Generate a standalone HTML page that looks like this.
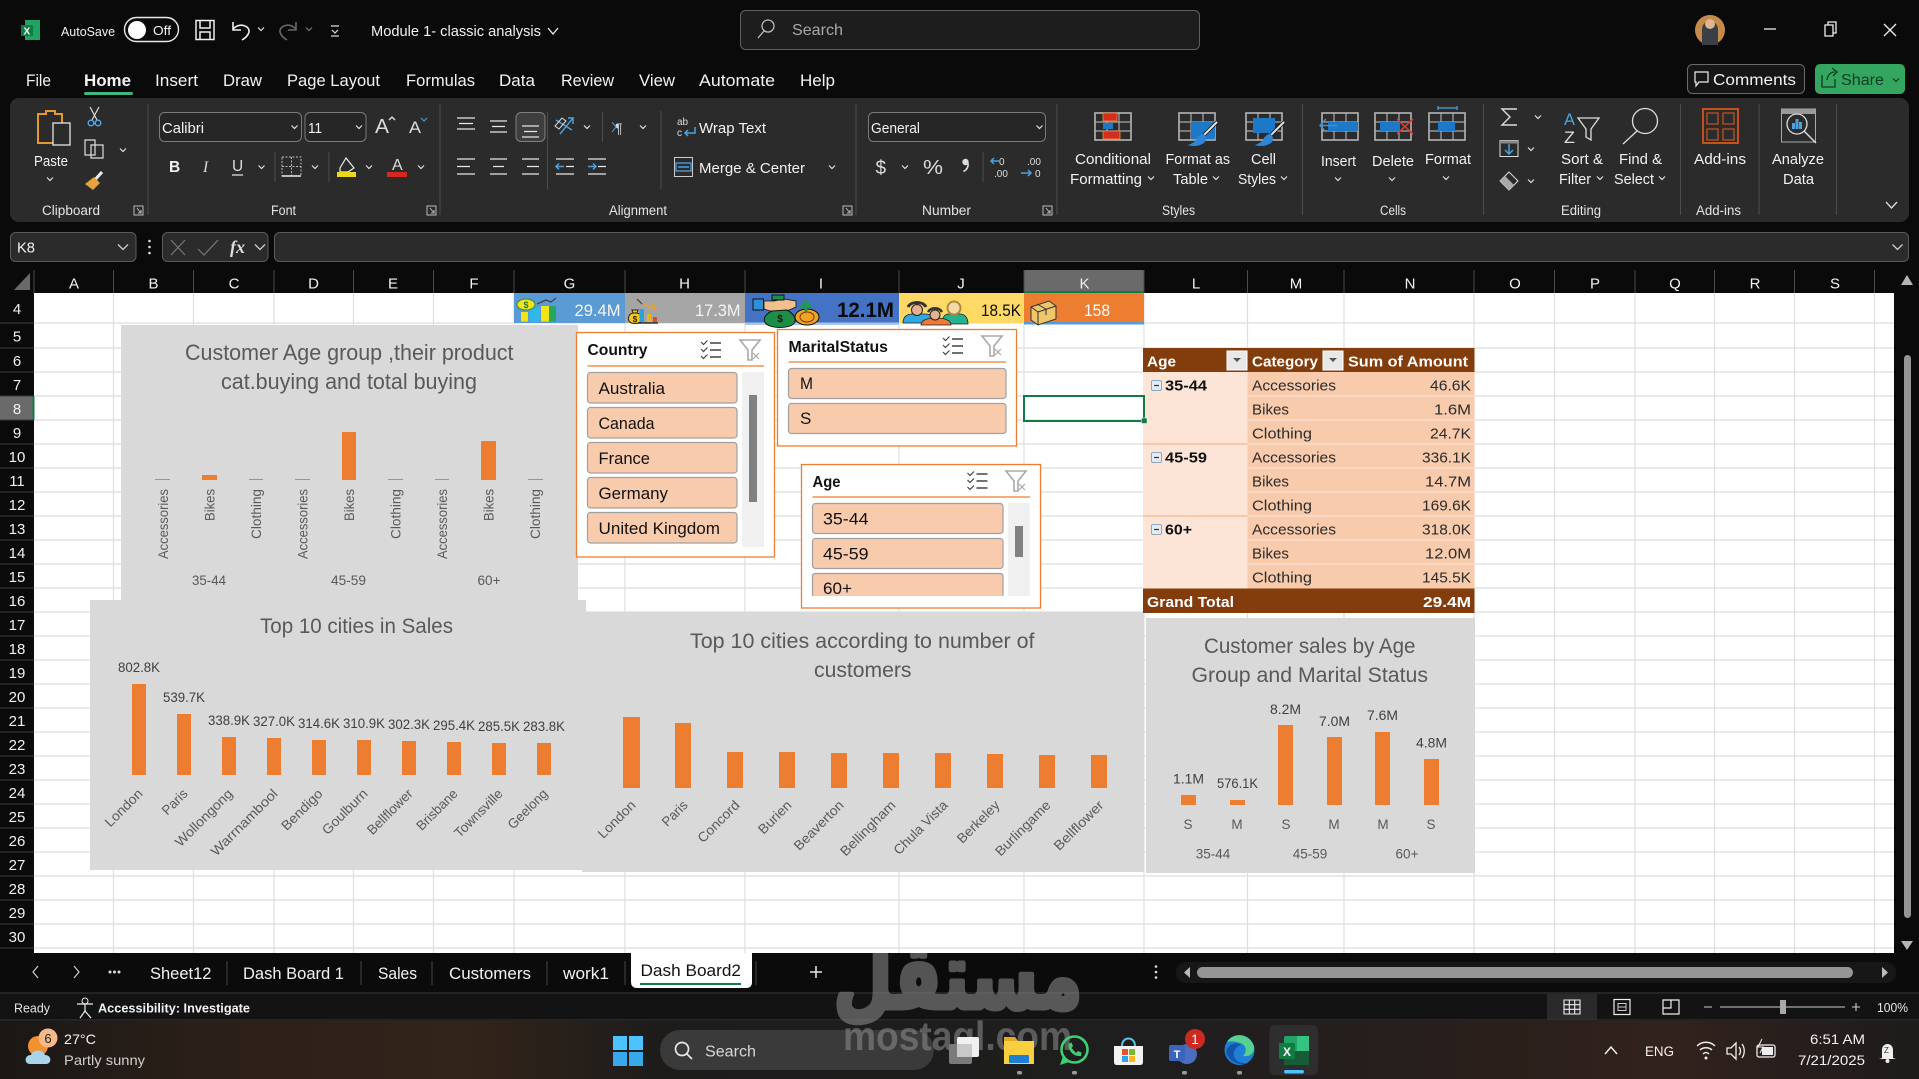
<!DOCTYPE html>
<html lang="en"><head><meta charset="utf-8"><title>Module 1- classic analysis - Excel</title>
<style>
html,body{margin:0;padding:0;background:#0a0a0a;width:1919px;height:1079px;overflow:hidden}
svg{display:block;font-family:"Liberation Sans",sans-serif}
.w{fill:#f2f2f2}.g{fill:#595959}.d{fill:#404040}.k{fill:#111}
.ln{fill:none;stroke:#e6e6e6;stroke-width:1.3}
.lb{fill:none;stroke:#4aa3e0;stroke-width:1.5}
.sep{stroke:#4d4d4d;stroke-width:1}
</style></head><body>
<svg xmlns="http://www.w3.org/2000/svg" width="1919" height="1079" viewBox="0 0 1919 1079">
<defs>
<path id="c" d="M-3-1.5 0 1.5 3-1.5" fill="none" stroke="#e0e0e0" stroke-width="1.2"/>
<path id="cb" d="M-5-2.5 0 2.5 5-2.5" fill="none" stroke="#d0d0d0" stroke-width="1.3"/>
<g id="gr"><path d="M12 0V27M24 0V27M0 9H36M0 18H36" stroke="#a8a8a8" stroke-width="1.2"/><rect x="0" y="0" width="36" height="27" fill="none" stroke="#b5b5b5" stroke-width="1.6"/></g>
<g id="br"><path d="M0 0 -15 15" stroke="#111" stroke-width="3.6"/><path d="M0 0 -15 15" stroke="#e8e8e8" stroke-width="2"/><path d="M-13 12C-18 12-20 16-21 18-23 21-27 22-29 23-24 25-17 24-13 21-10 18-11 14-13 12Z" fill="#2f86d6"/></g>
<g id="ms"><path d="M0 2l2.500 2.500 4-4M0 9l2.500 2.500 4-4M0 16l2.500 2.500 4-4" fill="none" stroke="#444" stroke-width="1.2"/><path d="M9 3H20M9 10H20M9 17H20" stroke="#444" stroke-width="1.4"/></g>
<g id="cf"><path d="M0 0H20L12 10V20H8V10Z" fill="none" stroke="#a8a8a8" stroke-width="1.6"/><path d="M13 13l6 6M19 13l-6 6" stroke="#a8a8a8" stroke-width="1.2"/></g>
<g id="mb"><rect width="10" height="10" rx="1.500" fill="#e3ebf3" stroke="#8fa6bd"/><path d="M2.500 5H7.500" stroke="#333" stroke-width="1.2"/></g>
<g id="db"><rect width="20" height="19" fill="#e8e8e8" stroke="#fff"/><path d="M6 7H14L10 11Z" fill="#555"/></g>
</defs>

<!-- window background -->
<rect width="1919" height="1079" fill="#0a0a0a"/>

<!-- title bar -->
<rect x="25" y="20" width="15" height="20" fill="#21a366"/><rect x="21" y="25" width="12" height="11" fill="#107c41"/>
<text x="23.500" y="34.500" font-size="10" font-weight="bold" fill="#fff">X</text>
<text x="61" y="36" font-size="13" class="w" textLength="54" lengthAdjust="spacingAndGlyphs">AutoSave</text>
<rect x="124.500" y="17.500" width="54" height="24" rx="12" fill="#0a0a0a" stroke="#e8e8e8" stroke-width="1.4"/>
<circle cx="137" cy="30" r="9" fill="#fff"/>
<text x="153" y="35" font-size="13" class="w" textLength="18" lengthAdjust="spacingAndGlyphs">Off</text>
<path d="M196 20.500H214V39.500H196ZM200 21V28H210V21M200 39V32H210V39" fill="none" stroke="#eee" stroke-width="1.500"/>
<path d="M233 22V30H241M233 29C240 22 250 26 249 32 248 36 245 38 242 40" fill="none" stroke="#eee" stroke-width="1.600"/>
<use href="#c" x="261" y="29"/>
<path d="M296 22V30H288M296 29C289 22 279 26 280 32 281 36 284 38 287 40" fill="none" stroke="#666" stroke-width="1.600"/>
<use href="#c" x="309" y="29" opacity=".5"/>
<path d="M331 26H339M332 30 335 33 338 30" fill="none" stroke="#ddd" stroke-width="1.200"/><path d="M331 36H339" stroke="#ddd" stroke-width="1.200"/>
<text x="371" y="36" font-size="14.500" class="w" textLength="170" lengthAdjust="spacingAndGlyphs">Module 1- classic analysis</text>
<path d="M548 28 553 34 558 28" fill="none" stroke="#eee" stroke-width="1.300"/>
<rect x="740.500" y="10.500" width="459" height="39" rx="5" fill="#1d1d1d" stroke="#5f5f5f"/>
<circle cx="768" cy="26" r="6" fill="none" stroke="#bbb" stroke-width="1.300"/><path d="M764 31 758 38" stroke="#bbb" stroke-width="1.300"/>
<text x="792" y="35" font-size="16" fill="#a8a8a8" textLength="51" lengthAdjust="spacingAndGlyphs">Search</text>
<circle cx="1710" cy="30" r="15" fill="#c58a4a"/><path d="M1702 45V30C1702 18 1718 18 1718 30V45Z" fill="#3a3f45"/><circle cx="1710" cy="24" r="5" fill="#e0b48c"/>
<path d="M1764 29H1776" stroke="#eee" stroke-width="1.300"/>
<path d="M1825 25H1833V36H1825ZM1828 25V22H1836V33H1833" fill="none" stroke="#eee" stroke-width="1.300"/>
<path d="M1884 24 1896 36M1896 24 1884 36" stroke="#eee" stroke-width="1.300"/>

<!-- comments/share -->
<rect x="1687.500" y="64.500" width="117" height="29" rx="5" fill="#161616" stroke="#6a6a6a"/>
<path d="M1695 72H1708V82H1699L1696 86V82H1695Z" fill="none" stroke="#eee" stroke-width="1.200"/>
<text x="1713" y="85" font-size="15.500" class="w" textLength="83" lengthAdjust="spacingAndGlyphs">Comments</text>
<rect x="1815" y="64" width="90" height="30" rx="5" fill="#34a660"/>
<path d="M1822 75V87H1835V79M1827 80C1828 74 1831 72 1835 72M1832 68 1837 72 1833 76" fill="none" stroke="#0f3d22" stroke-width="1.300"/>
<text x="1841" y="85" font-size="15.500" fill="#0f3d22" textLength="43" lengthAdjust="spacingAndGlyphs">Share</text>
<path d="M1893 78.500 1896 81.500 1899 78.500" fill="none" stroke="#0f3d22" stroke-width="1.200"/>

<!-- tabs -->
<g font-size="16.500" class="w">
<text x="26" y="86" textLength="25" lengthAdjust="spacingAndGlyphs">File</text>
<text x="84" y="86" font-weight="bold" textLength="47" lengthAdjust="spacingAndGlyphs">Home</text>
<text x="155" y="86" textLength="43" lengthAdjust="spacingAndGlyphs">Insert</text>
<text x="223" y="86" textLength="39" lengthAdjust="spacingAndGlyphs">Draw</text>
<text x="287" y="86" textLength="93" lengthAdjust="spacingAndGlyphs">Page Layout</text>
<text x="406" y="86" textLength="69" lengthAdjust="spacingAndGlyphs">Formulas</text>
<text x="499" y="86" textLength="36" lengthAdjust="spacingAndGlyphs">Data</text>
<text x="561" y="86" textLength="53" lengthAdjust="spacingAndGlyphs">Review</text>
<text x="639" y="86" textLength="36" lengthAdjust="spacingAndGlyphs">View</text>
<text x="699" y="86" textLength="76" lengthAdjust="spacingAndGlyphs">Automate</text>
<text x="800" y="86" textLength="35" lengthAdjust="spacingAndGlyphs">Help</text>
</g>
<rect x="84" y="92" width="49" height="3" rx="1.500" fill="#3fb67f"/>

<!-- ribbon -->
<rect x="10" y="98" width="1899" height="124" rx="9" fill="#2b2b2b"/>
<path class="sep" d="M148 104V215M440 104V215M856 104V215M1057 104V215M1302.500 104V215M1483.500 104V215M1680.500 104V215M1759 104V215M1836.500 104V215M547.500 112V189M602.500 112V142M661 111V189M275 152V182M329 152V182M983 152V182"/>

<!-- clipboard -->
<path d="M38 114H46V111H55V114H62V143H38Z" fill="none" stroke="#e8962e" stroke-width="2"/>
<rect x="53" y="123" width="17" height="22" fill="#2b2b2b" stroke="#e6e6e6" stroke-width="1.300"/>
<text x="34" y="166" font-size="14.500" class="w" textLength="34" lengthAdjust="spacingAndGlyphs">Paste</text>
<use href="#c" x="50" y="179"/>
<path d="M90 107 97 120M99 107 92 120" stroke="#ddd" stroke-width="1.200"/><circle cx="91" cy="123" r="2.800" class="lb"/><circle cx="98" cy="123" r="2.800" class="lb"/>
<path d="M85 140H95V155H85ZM91 145H103V158H91Z" fill="#2b2b2b" stroke="#ddd" stroke-width="1.200"/>
<use href="#c" x="123" y="150"/>
<path d="M102 172 93 182" stroke="#eee" stroke-width="3"/><path d="M85 184 94 177 100 183 93 190Z" fill="#e8a33a"/>

<text x="42" y="215" font-size="13.500" fill="#e4e4e4" textLength="58" lengthAdjust="spacingAndGlyphs">Clipboard</text>
<text x="271" y="215" font-size="13.500" fill="#e4e4e4" textLength="25" lengthAdjust="spacingAndGlyphs">Font</text>
<text x="609" y="215" font-size="13.500" fill="#e4e4e4" textLength="58" lengthAdjust="spacingAndGlyphs">Alignment</text>
<text x="922" y="215" font-size="13.500" fill="#e4e4e4" textLength="49" lengthAdjust="spacingAndGlyphs">Number</text>
<text x="1162" y="215" font-size="13.500" fill="#e4e4e4" textLength="33" lengthAdjust="spacingAndGlyphs">Styles</text>
<text x="1380" y="215" font-size="13.500" fill="#e4e4e4" textLength="26" lengthAdjust="spacingAndGlyphs">Cells</text>
<text x="1561" y="215" font-size="13.500" fill="#e4e4e4" textLength="40" lengthAdjust="spacingAndGlyphs">Editing</text>
<text x="1696" y="215" font-size="13.500" fill="#e4e4e4" textLength="45" lengthAdjust="spacingAndGlyphs">Add-ins</text>
<g fill="none" stroke="#bbb" stroke-width="1"><path d="M134 206V215H143V206ZM137 208 141 213M141 210V213H138"/><path d="M427 206V215H436V206ZM430 208 434 213M434 210V213H431"/><path d="M843 206V215H852V206ZM846 208 850 213M850 210V213H847"/><path d="M1043 206V215H1052V206ZM1046 208 1050 213M1050 210V213H1047"/></g>

<!-- font -->
<rect x="159.500" y="112.500" width="142" height="29" rx="5" fill="#262626" stroke="#7a7a7a"/>
<text x="162" y="133" font-size="15" class="w" textLength="42" lengthAdjust="spacingAndGlyphs">Calibri</text><use href="#c" x="294.500" y="127"/>
<rect x="305" y="112.500" width="61" height="29" rx="5" fill="#262626" stroke="#7a7a7a"/>
<text x="308" y="133" font-size="15" class="w" textLength="14" lengthAdjust="spacingAndGlyphs">11</text><use href="#c" x="359" y="127"/>
<text x="375" y="133" font-size="20" fill="#ddd" textLength="14" lengthAdjust="spacingAndGlyphs">A</text><path d="M389 120 392 117 395 120" class="ln" stroke-width="1"/>
<text x="409" y="133" font-size="17" fill="#ddd" textLength="12" lengthAdjust="spacingAndGlyphs">A</text><path d="M421 118 424 121 427 118" fill="none" stroke="#4aa3e0"/>
<text x="169" y="172" font-size="15.500" font-weight="bold" class="w">B</text>
<text x="203" y="172" font-size="15.500" font-style="italic" fill="#ddd" font-family="Liberation Serif">I</text>
<text x="232" y="171" font-size="15.500" fill="#ddd">U</text><path d="M232 175H243" stroke="#ddd" stroke-width="1.300"/>
<use href="#c" x="261.500" y="167"/>
<path d="M282 157H301V176H282ZM291.500 157V176M282 166.500H301" fill="none" stroke="#bbb" stroke-dasharray="2 1.500"/><path d="M282 176H301" stroke="#eee" stroke-width="1.500"/>
<use href="#c" x="315" y="167"/>
<path d="M346 158 354 168 348 172H340L340 168Z" fill="none" stroke="#eee" stroke-width="1.200"/>
<rect x="337" y="172" width="19" height="5" fill="#ebd81a"/><use href="#c" x="369" y="167"/>
<text x="392" y="170" font-size="16" fill="#ddd">A</text><rect x="387" y="172" width="20" height="5" fill="#d7281e"/><use href="#c" x="421" y="167"/>

<!-- alignment -->
<path class="ln" d="M457 118H475M459 123.500H473M457 129H475M490 121H507M492 126.500H505M490 132H507"/>
<rect x="516" y="112.500" width="29" height="29" rx="5" fill="#3e3e3e" stroke="#7f7f7f"/>
<path class="ln" d="M522 126H539M524 131.500H537M522 137H539"/>
<path d="M556 120 572 130M560 134 573 118 568 118M573 118V124" fill="none" stroke="#4aa3e0" stroke-width="1.400"/><path d="M555 126 562 118 566 121 559 129Z" fill="none" stroke="#ddd"/>
<use href="#c" x="587" y="127"/>
<text x="615" y="133" font-size="14" fill="#ddd">¶</text><path d="M612 122 616 127 612 132" fill="none" stroke="#4aa3e0"/>
<use href="#c" x="643" y="127"/>
<text x="677" y="125" font-size="10" fill="#ddd">ab</text><text x="677" y="136" font-size="10" fill="#ddd">c</text><path d="M695 127V133H685M688 130 685 133 688 136" class="lb" stroke-width="1.200"/>
<text x="699" y="133" font-size="14.500" class="w" textLength="67" lengthAdjust="spacingAndGlyphs">Wrap Text</text>
<path class="ln" d="M457 159H475M457 166.500H470M457 174H475M490 159H507M493 166.500H504M490 174H507M522 159H539M527 166.500H539M522 174H539M556 159H574M566 166.500H574M556 174H574M588 159H606M598 166.500H606M588 174H606"/>
<path d="M556 166.500H564M559 163.500 556 166.500 559 169.500M588 166.500H596M593 163.500 596 166.500 593 169.500" class="lb"/>
<rect x="674.500" y="157.500" width="18" height="19" fill="none" stroke="#ccc"/><rect x="676" y="163" width="15" height="8" fill="none" stroke="#4aa3e0" stroke-width="1.300"/><path d="M678 167H689" class="lb" stroke-width="1"/>
<text x="699" y="173" font-size="14.500" class="w" textLength="106" lengthAdjust="spacingAndGlyphs">Merge &amp; Center</text><use href="#c" x="832" y="167"/>

<!-- number -->
<rect x="868.500" y="112.500" width="177" height="29" rx="5" fill="#262626" stroke="#7a7a7a"/>
<text x="871" y="133" font-size="15" class="w" textLength="49" lengthAdjust="spacingAndGlyphs">General</text><use href="#c" x="1039.500" y="127"/>
<text x="875.500" y="174" font-size="19" fill="#ddd">$</text><use href="#c" x="905" y="167"/>
<text x="923" y="174" font-size="20" fill="#ddd" textLength="20" lengthAdjust="spacingAndGlyphs">%</text>
<circle cx="965.500" cy="162" r="3.200" fill="#ddd"/><path d="M968 163C968.500 167 966.500 170 963.500 171.500" fill="none" stroke="#ddd" stroke-width="1.600"/>
<text x="999" y="165" font-size="10" fill="#ddd">0</text><text x="994" y="177" font-size="10" fill="#ddd">.00</text><path d="M1000 161H991M994 158 991 161 994 164" class="lb"/>
<text x="1027" y="165" font-size="10" fill="#ddd">.00</text><text x="1035" y="177" font-size="10" fill="#ddd">0</text><path d="M1021 173H1031M1028 170 1031 173 1028 176" class="lb"/>

<!-- styles -->
<use href="#gr" x="1095" y="113"/><rect x="1103" y="113" width="14" height="8" fill="#d62b1f" stroke="#e8903a" stroke-width=".8"/><rect x="1103" y="123" width="10" height="6" fill="#1e78c8"/><rect x="1103" y="131" width="17" height="8" fill="#d62b1f" stroke="#e8903a" stroke-width=".8"/>
<text x="1075" y="164" font-size="14.500" class="w" textLength="76" lengthAdjust="spacingAndGlyphs">Conditional</text>
<text x="1070" y="184" font-size="14.500" class="w" textLength="72" lengthAdjust="spacingAndGlyphs">Formatting</text><use href="#c" x="1151" y="178"/>
<use href="#gr" x="1179" y="113"/><rect x="1191" y="122" width="24" height="17" fill="#1e78c8"/><use href="#br" x="1217" y="122"/>
<text x="1165.500" y="164" font-size="14.500" class="w" textLength="64.500" lengthAdjust="spacingAndGlyphs">Format as</text>
<text x="1173" y="184" font-size="14.500" class="w" textLength="35" lengthAdjust="spacingAndGlyphs">Table</text><use href="#c" x="1216" y="178"/>
<use href="#gr" x="1246" y="113"/><rect x="1253" y="118" width="22" height="15" fill="#1e78c8"/><use href="#br" x="1284" y="122"/>
<text x="1251" y="164" font-size="14.500" class="w" textLength="25" lengthAdjust="spacingAndGlyphs">Cell</text>
<text x="1238" y="184" font-size="14.500" class="w" textLength="38" lengthAdjust="spacingAndGlyphs">Styles</text><use href="#c" x="1284" y="178"/>

<!-- cells -->
<use href="#gr" x="1322" y="113"/><rect x="1328" y="122" width="30" height="9" fill="#1e78c8"/><path d="M1337 125.500H1320M1326 119 1320 125.500 1326 132" fill="none" stroke="#3f8fd8" stroke-width="1.500"/>
<text x="1321" y="166" font-size="14.500" class="w" textLength="35" lengthAdjust="spacingAndGlyphs">Insert</text><use href="#c" x="1338" y="179"/>
<use href="#gr" x="1375" y="113"/><rect x="1380" y="122" width="20" height="9" fill="#1e78c8"/><path d="M1397 119 1413 134M1413 119 1397 134" stroke="#e0392b" stroke-width="1.600"/>
<text x="1372" y="166" font-size="14.500" class="w" textLength="42" lengthAdjust="spacingAndGlyphs">Delete</text><use href="#c" x="1392" y="179"/>
<use href="#gr" x="1429" y="113"/><rect x="1438" y="122" width="17" height="9" fill="#1e78c8"/><path d="M1438 108H1457M1438 106V110M1457 106V110" stroke="#4aa3e0" stroke-width="1.200"/>
<text x="1425" y="164" font-size="14.500" class="w" textLength="46" lengthAdjust="spacingAndGlyphs">Format</text><use href="#c" x="1446" y="178"/>

<!-- editing -->
<path d="M1517 109H1502L1510 117 1502 125H1517" fill="none" stroke="#ddd" stroke-width="1.400"/><use href="#c" x="1538" y="117"/>
<rect x="1500" y="140.500" width="18" height="16" fill="none" stroke="#ddd"/><rect x="1500" y="140.500" width="18" height="3" fill="#888"/><path d="M1509 144V154M1505 150 1509 154 1513 150" class="lb"/><use href="#c" x="1531" y="149"/>
<path d="M1509 172 1518 181 1509 190 1500 181Z" fill="none" stroke="#ddd"/><path d="M1500 181 1505 176 1514 185 1509 190Z" fill="#aaa"/><use href="#c" x="1531" y="181"/>
<text x="1564" y="125" font-size="17" fill="#4aa3e0" textLength="11" lengthAdjust="spacingAndGlyphs">A</text><text x="1564" y="143" font-size="17" fill="#ddd" textLength="11" lengthAdjust="spacingAndGlyphs">Z</text>
<path d="M1578 118H1599L1591 129V140L1586 137V129Z" fill="none" stroke="#ddd" stroke-width="1.300"/>
<text x="1561" y="164" font-size="14.500" class="w" textLength="42" lengthAdjust="spacingAndGlyphs">Sort &amp;</text>
<text x="1559" y="184" font-size="14.500" class="w" textLength="32" lengthAdjust="spacingAndGlyphs">Filter</text><use href="#c" x="1600" y="178"/>
<circle cx="1645" cy="121" r="12.500" fill="none" stroke="#ddd" stroke-width="1.300"/><path d="M1637 131 1623 144" stroke="#ddd" stroke-width="1.300"/>
<text x="1619" y="164" font-size="14.500" class="w" textLength="43" lengthAdjust="spacingAndGlyphs">Find &amp;</text>
<text x="1614" y="184" font-size="14.500" class="w" textLength="40" lengthAdjust="spacingAndGlyphs">Select</text><use href="#c" x="1662" y="178"/>

<!-- add-ins, analyze -->
<rect x="1703" y="109" width="35" height="34" fill="none" stroke="#c2521c" stroke-width="2"/>
<path d="M1707 113H1718V124H1707ZM1723 113H1734V124H1723ZM1707 129H1718V140H1707ZM1723 129H1734V140H1723Z" fill="none" stroke="#c2521c" stroke-width="1.300"/>
<text x="1694" y="164" font-size="14.500" class="w" textLength="52" lengthAdjust="spacingAndGlyphs">Add-ins</text>
<rect x="1781.500" y="109" width="34" height="33" fill="none" stroke="#aaa"/><rect x="1781.500" y="109" width="34" height="5" fill="#999"/>
<circle cx="1797" cy="124" r="10" fill="#2b2b2b" stroke="#ddd" stroke-width="1.300"/><path d="M1792 123V129H1795V123ZM1795.500 119V129H1798.500V119ZM1799 122V129H1802V122Z" fill="#4aa3e0"/><path d="M1804 131 1816 143" stroke="#ddd" stroke-width="1.500"/>
<text x="1772" y="164" font-size="14.500" class="w" textLength="52" lengthAdjust="spacingAndGlyphs">Analyze</text>
<text x="1783" y="184" font-size="14.500" class="w" textLength="31" lengthAdjust="spacingAndGlyphs">Data</text>
<path d="M1886 202 1891.500 208 1897 202" fill="none" stroke="#ddd" stroke-width="1.300"/>

<!-- formula bar -->
<rect x="10.500" y="232.500" width="125.500" height="29" rx="5" fill="#2b2b2b" stroke="#5a5a5a"/>
<text x="17" y="252.500" font-size="15" class="w" textLength="18" lengthAdjust="spacingAndGlyphs">K8</text><use href="#cb" x="123" y="247"/>
<circle cx="149.500" cy="241" r="1.300" fill="#ddd"/><circle cx="149.500" cy="247" r="1.300" fill="#ddd"/><circle cx="149.500" cy="253" r="1.300" fill="#ddd"/>
<rect x="162.500" y="232.500" width="105.500" height="29" rx="5" fill="#2b2b2b" stroke="#5a5a5a"/>
<path d="M171 240 185 255M185 240 171 255" stroke="#777" stroke-width="1.200"/><path d="M198 249 204 255 218 240" fill="none" stroke="#777" stroke-width="1.200"/>
<text x="230" y="253" font-size="18" font-style="italic" font-weight="bold" fill="#ddd" font-family="Liberation Serif">fx</text><use href="#cb" x="260" y="247"/>
<rect x="274.500" y="232.500" width="1634" height="29" rx="5" fill="#2b2b2b" stroke="#5a5a5a"/><use href="#cb" x="1897.500" y="247"/>

<!-- sheet white + gridlines -->
<rect x="34" y="293" width="1860" height="660" fill="#fff"/>
<path d="M113.500 293V953M193.500 293V953M274 293V953M353.500 293V953M433.500 293V953M514 293V953M625 293V953M745 293V953M899 293V953M1024 293V953M1144 293V953M1247.500 293V953M1344 293V953M1474 293V953M1554.500 293V953M1635 293V953M1714.500 293V953M1794.500 293V953M1874.500 293V953M34 323H1894M34 348H1894M34 372H1894M34 396H1894M34 420H1894M34 444H1894M34 468H1894M34 492H1894M34 516H1894M34 540H1894M34 564H1894M34 588H1894M34 612H1894M34 636H1894M34 660H1894M34 684H1894M34 708H1894M34 732H1894M34 756H1894M34 780H1894M34 804H1894M34 828H1894M34 852H1894M34 876H1894M34 900H1894M34 924H1894M34 948H1894" fill="none" stroke="#dedede" stroke-width="1.200"/>

<!-- column headers -->
<rect x="0" y="270" width="1894" height="23" fill="#0a0a0a"/>
<path d="M30 273V290H14Z" fill="#6a6a6a"/>
<rect x="1024" y="270" width="120" height="23" fill="#6a6a6a"/><rect x="1024" y="291" width="120" height="2" fill="#107c41"/>
<path d="M34 270V293M113.500 270V293M193.500 270V293M274 270V293M353.500 270V293M433.500 270V293M514 270V293M625 270V293M745 270V293M899 270V293M1024 270V293M1144 270V293M1247.500 270V293M1344 270V293M1474 270V293M1554.500 270V293M1635 270V293M1714.500 270V293M1794.500 270V293M1874.500 270V293" stroke="#4a4a4a"/>
<g font-size="15" class="w" text-anchor="middle">
<text x="74" y="288.500">A</text><text x="153.500" y="288.500">B</text><text x="234" y="288.500">C</text><text x="313.500" y="288.500">D</text><text x="393" y="288.500">E</text><text x="474" y="288.500">F</text><text x="569.500" y="288.500">G</text><text x="684.500" y="288.500">H</text><text x="821" y="288.500">I</text><text x="961" y="288.500">J</text><text x="1084.500" y="288.500">K</text><text x="1196" y="288.500">L</text><text x="1296" y="288.500">M</text><text x="1410" y="288.500">N</text><text x="1515" y="288.500">O</text><text x="1595" y="288.500">P</text><text x="1675" y="288.500">Q</text><text x="1755" y="288.500">R</text><text x="1835" y="288.500">S</text>
</g>

<!-- row headers -->
<rect x="0" y="293" width="34" height="660" fill="#0a0a0a"/>
<rect x="0" y="396" width="33" height="24" fill="#6a6a6a"/><rect x="32.500" y="396" width="2" height="24" fill="#107c41"/>
<path d="M0 323H34M0 348H34M0 372H34M0 396H34M0 420H34M0 444H34M0 468H34M0 492H34M0 516H34M0 540H34M0 564H34M0 588H34M0 612H34M0 636H34M0 660H34M0 684H34M0 708H34M0 732H34M0 756H34M0 780H34M0 804H34M0 828H34M0 852H34M0 876H34M0 900H34M0 924H34M0 948H34" stroke="#3c3c3c"/>
<g font-size="15" class="w" text-anchor="middle">
<text x="17" y="314">4</text><text x="17" y="341.500">5</text><text x="17" y="366">6</text><text x="17" y="390">7</text><text x="17" y="414">8</text><text x="17" y="438">9</text><text x="17" y="462">10</text><text x="17" y="486">11</text><text x="17" y="510">12</text><text x="17" y="534">13</text><text x="17" y="558">14</text><text x="17" y="582">15</text><text x="17" y="606">16</text><text x="17" y="630">17</text><text x="17" y="654">18</text><text x="17" y="678">19</text><text x="17" y="702">20</text><text x="17" y="726">21</text><text x="17" y="750">22</text><text x="17" y="774">23</text><text x="17" y="798">24</text><text x="17" y="822">25</text><text x="17" y="846">26</text><text x="17" y="870">27</text><text x="17" y="894">28</text><text x="17" y="918">29</text><text x="17" y="942">30</text>
</g>

<!-- KPI row -->
<rect x="514" y="293" width="111" height="30" fill="#5b9bd5"/>
<rect x="625" y="293" width="120" height="30" fill="#a5a5a5"/>
<rect x="745" y="293" width="154" height="30" fill="#4472c4"/><rect x="745" y="322.500" width="154" height="2.500" fill="#a9c6ea"/>
<rect x="899" y="293" width="125" height="30" fill="#ffd966"/>
<rect x="1024" y="293" width="120" height="30" fill="#ed7d31"/><rect x="1024" y="322" width="120" height="2.500" fill="#5b9bd5"/>
<text x="574.500" y="316" font-size="17" fill="#f4f4f4" textLength="46" lengthAdjust="spacingAndGlyphs">29.4M</text>
<text x="695" y="316" font-size="17" fill="#f4f4f4" textLength="45.500" lengthAdjust="spacingAndGlyphs">17.3M</text>
<text x="837" y="317" font-size="21" fill="#0a0a0a" font-weight="bold" textLength="57" lengthAdjust="spacingAndGlyphs">12.1M</text>
<text x="981" y="316" font-size="17" fill="#0a0a0a" textLength="40" lengthAdjust="spacingAndGlyphs">18.5K</text>
<text x="1084" y="316" font-size="17" fill="#fff" textLength="26" lengthAdjust="spacingAndGlyphs">158</text>
<!-- KPI icons -->
<rect x="521" y="312" width="7" height="9.500" fill="#f3e418"/><rect x="530" y="308" width="10" height="13.500" fill="#2fb8e8"/><rect x="541" y="306" width="8" height="15.500" fill="#f3e418"/><rect x="549" y="306" width="7" height="15.500" fill="#26a85a"/>
<ellipse cx="526" cy="304.500" rx="9" ry="5.500" fill="#f3e418" stroke="#2a8a4a"/><text x="526" y="308" font-size="9" fill="#1f7a3a" text-anchor="middle" font-weight="bold">$</text><path d="M537 304 546 300 551 302 556 298" fill="none" stroke="#444" stroke-width="1.300"/>
<path d="M629 316C627 321 630 323.500 635 323.500 640 323.500 643 321 641 316 640 312 630 312 629 316Z" fill="#f5c518" stroke="#222"/><path d="M632 310H638L637 313H633Z" fill="#f5c518" stroke="#222"/><text x="635" y="322" font-size="8" font-weight="bold" fill="#222" text-anchor="middle">$</text>
<rect x="639.500" y="309" width="4.500" height="13" fill="#2ba3d8"/><rect x="647" y="314" width="4" height="8" fill="#e8b818"/><rect x="653" y="317" width="4" height="5" fill="#e04a2a"/><path d="M638 323H658" stroke="#111" stroke-width="1.200"/><path d="M638 300C643 305 649 307 656 308M652 304 656 308 651 310" fill="none" stroke="#e8a12a" stroke-width="1.300"/><path d="M637 299 642 304" stroke="#333"/>
<rect x="753" y="299" width="10.500" height="11" fill="#2c8fd8" stroke="#111"/><path d="M764 301H774L784 299 796 301V307L787 311H770L764 309Z" fill="#f2c08d" stroke="#111" stroke-width=".8"/>
<path d="M772 311C761 316 760 327 780 327.500 800 327 798 316 787 310Z" fill="#1b8f47" stroke="#111"/><rect x="772" y="295" width="12" height="5" fill="#1b8f47" stroke="#111"/><text x="780" y="322" font-size="10" font-weight="bold" fill="#111" text-anchor="middle">$</text>
<ellipse cx="807" cy="317" rx="12" ry="8" fill="#f0a422" stroke="#111"/><ellipse cx="807" cy="317" rx="7" ry="5" fill="none" stroke="#7a3a10"/><path d="M806 312V305M801 308 806 302 811 308" fill="none" stroke="#1f9a4f" stroke-width="3"/>
<path d="M903 323C903 316 908 314 912 314H925C931 314 934 316 934 323Z" fill="#2fa9e0" stroke="#222" stroke-width=".8"/><circle cx="917" cy="310" r="5.500" fill="#e8b090" stroke="#222"/><path d="M908 307C911 301 923 301 926 307" stroke="#333" stroke-width="3" fill="none"/>
<path d="M942 324C942 317 945 314 949 314H960C965 314 968 318 968 324Z" fill="#27b28f" stroke="#222" stroke-width=".8"/><circle cx="954" cy="308" r="6.500" fill="#f5d8a8" stroke="#b08a3a" stroke-width="2"/>
<path d="M921 325C921 320 928 318 936 318 944 318 951 320 951 325Z" fill="#ef7a36" stroke="#222" stroke-width=".8"/><circle cx="935" cy="315" r="5" fill="#e8b090" stroke="#222"/><path d="M928 312C931 307 939 307 942 312" stroke="#333" stroke-width="2.500" fill="none"/>
<path d="M1031 307 1049 301 1056 306V319L1038 325 1031 320Z" fill="#f0c66a" stroke="#333"/><path d="M1031 307 1038 312V325M1038 312 1056 306M1037 304 1046 309V315" fill="none" stroke="#333"/>

<!-- charts backgrounds -->
<rect x="121" y="325" width="457" height="275" fill="#d9d9d9"/>
<rect x="90" y="600" width="496" height="270" fill="#d9d9d9"/>
<rect x="582" y="612" width="562" height="260" fill="#d9d9d9"/>
<rect x="1146" y="618" width="329" height="255" fill="#d9d9d9"/>

<!-- chart 1 -->
<text x="185" y="360" font-size="22" class="g" textLength="328.500" lengthAdjust="spacingAndGlyphs">Customer Age group ,their product</text>
<text x="221" y="389" font-size="22" class="g" textLength="256" lengthAdjust="spacingAndGlyphs">cat.buying and total buying</text>
<g fill="#ed7d31"><rect x="155" y="479" width="15" height="1"/><rect x="202" y="475" width="15" height="5"/><rect x="249" y="479" width="14" height="1"/><rect x="295" y="479" width="15" height="1"/><rect x="342" y="432" width="14" height="48"/><rect x="388" y="479" width="15" height="1"/><rect x="435" y="479" width="14" height="1"/><rect x="481" y="441" width="15" height="39"/><rect x="528" y="479" width="15" height="1"/></g>
<g font-size="13.500" class="g">
<text transform="translate(168 559) rotate(-90)" textLength="70" lengthAdjust="spacingAndGlyphs">Accessories</text>
<text transform="translate(214.500 521) rotate(-90)" textLength="32" lengthAdjust="spacingAndGlyphs">Bikes</text>
<text transform="translate(261 539) rotate(-90)" textLength="50" lengthAdjust="spacingAndGlyphs">Clothing</text>
<text transform="translate(307.500 559) rotate(-90)" textLength="70" lengthAdjust="spacingAndGlyphs">Accessories</text>
<text transform="translate(354 521) rotate(-90)" textLength="32" lengthAdjust="spacingAndGlyphs">Bikes</text>
<text transform="translate(400.500 539) rotate(-90)" textLength="50" lengthAdjust="spacingAndGlyphs">Clothing</text>
<text transform="translate(447 559) rotate(-90)" textLength="70" lengthAdjust="spacingAndGlyphs">Accessories</text>
<text transform="translate(493.500 521) rotate(-90)" textLength="32" lengthAdjust="spacingAndGlyphs">Bikes</text>
<text transform="translate(540 539) rotate(-90)" textLength="50" lengthAdjust="spacingAndGlyphs">Clothing</text>
<text x="192" y="585" textLength="34" lengthAdjust="spacingAndGlyphs">35-44</text>
<text x="331" y="585" textLength="35" lengthAdjust="spacingAndGlyphs">45-59</text>
<text x="477.500" y="585" textLength="23" lengthAdjust="spacingAndGlyphs">60+</text>
</g>

<!-- chart 2 -->
<text x="260" y="633" font-size="21" class="g" textLength="193" lengthAdjust="spacingAndGlyphs">Top 10 cities in Sales</text>
<g fill="#ed7d31"><rect x="132" y="684" width="14" height="91"/><rect x="177" y="714" width="14" height="61"/><rect x="222" y="737" width="14" height="38"/><rect x="267" y="738" width="14" height="37"/><rect x="312" y="740" width="14" height="35"/><rect x="357" y="740" width="14" height="35"/><rect x="402" y="741" width="14" height="34"/><rect x="447" y="742" width="14" height="33"/><rect x="492" y="743" width="14" height="32"/><rect x="537" y="743" width="14" height="32"/></g>
<g font-size="13.500" class="d">
<text x="118" y="672" textLength="42" lengthAdjust="spacingAndGlyphs">802.8K</text>
<text x="163" y="702" textLength="42" lengthAdjust="spacingAndGlyphs">539.7K</text>
<text x="208" y="725" textLength="42" lengthAdjust="spacingAndGlyphs">338.9K</text>
<text x="253" y="726" textLength="42" lengthAdjust="spacingAndGlyphs">327.0K</text>
<text x="298" y="728" textLength="42" lengthAdjust="spacingAndGlyphs">314.6K</text>
<text x="343" y="728" textLength="42" lengthAdjust="spacingAndGlyphs">310.9K</text>
<text x="388" y="729" textLength="42" lengthAdjust="spacingAndGlyphs">302.3K</text>
<text x="433" y="730" textLength="42" lengthAdjust="spacingAndGlyphs">295.4K</text>
<text x="478" y="731" textLength="42" lengthAdjust="spacingAndGlyphs">285.5K</text>
<text x="523" y="731" textLength="42" lengthAdjust="spacingAndGlyphs">283.8K</text>
</g>
<g font-size="13.500" class="g" text-anchor="end">
<text transform="translate(143.500 794.500) rotate(-45)" textLength="47" lengthAdjust="spacingAndGlyphs">London</text>
<text transform="translate(188.500 794.500) rotate(-45)" textLength="30" lengthAdjust="spacingAndGlyphs">Paris</text>
<text transform="translate(233.500 794.500) rotate(-45)" textLength="75" lengthAdjust="spacingAndGlyphs">Wollongong</text>
<text transform="translate(278.500 794.500) rotate(-45)" textLength="88" lengthAdjust="spacingAndGlyphs">Warrnambool</text>
<text transform="translate(323.500 794.500) rotate(-45)" textLength="52" lengthAdjust="spacingAndGlyphs">Bendigo</text>
<text transform="translate(368.500 794.500) rotate(-45)" textLength="58" lengthAdjust="spacingAndGlyphs">Goulburn</text>
<text transform="translate(413.500 794.500) rotate(-45)" textLength="58" lengthAdjust="spacingAndGlyphs">Bellflower</text>
<text transform="translate(458.500 794.500) rotate(-45)" textLength="52" lengthAdjust="spacingAndGlyphs">Brisbane</text>
<text transform="translate(503.500 794.500) rotate(-45)" textLength="62" lengthAdjust="spacingAndGlyphs">Townsville</text>
<text transform="translate(548.500 794.500) rotate(-45)" textLength="50" lengthAdjust="spacingAndGlyphs">Geelong</text>
</g>

<!-- chart 3 -->
<text x="690" y="648" font-size="21" class="g" textLength="344.500" lengthAdjust="spacingAndGlyphs">Top 10 cities according to number of</text>
<text x="814" y="677" font-size="21" class="g" textLength="97.500" lengthAdjust="spacingAndGlyphs">customers</text>
<g fill="#ed7d31"><rect x="623" y="717" width="17" height="71"/><rect x="675" y="723" width="16" height="65"/><rect x="727" y="752" width="16" height="36"/><rect x="779" y="752" width="16" height="36"/><rect x="831" y="753" width="16" height="35"/><rect x="883" y="753" width="16" height="35"/><rect x="935" y="753" width="16" height="35"/><rect x="987" y="754" width="16" height="34"/><rect x="1039" y="755" width="16" height="33"/><rect x="1091" y="755" width="16" height="33"/></g>
<g font-size="13.500" class="g" text-anchor="end">
<text transform="translate(636.500 806) rotate(-45)" textLength="47" lengthAdjust="spacingAndGlyphs">London</text>
<text transform="translate(688.500 806) rotate(-45)" textLength="30" lengthAdjust="spacingAndGlyphs">Paris</text>
<text transform="translate(740.500 806) rotate(-45)" textLength="53" lengthAdjust="spacingAndGlyphs">Concord</text>
<text transform="translate(792.500 806) rotate(-45)" textLength="41" lengthAdjust="spacingAndGlyphs">Burien</text>
<text transform="translate(844.500 806) rotate(-45)" textLength="64" lengthAdjust="spacingAndGlyphs">Beaverton</text>
<text transform="translate(896.500 806) rotate(-45)" textLength="72" lengthAdjust="spacingAndGlyphs">Bellingham</text>
<text transform="translate(948.500 806) rotate(-45)" textLength="70" lengthAdjust="spacingAndGlyphs">Chula Vista</text>
<text transform="translate(1000.500 806) rotate(-45)" textLength="54" lengthAdjust="spacingAndGlyphs">Berkeley</text>
<text transform="translate(1051.500 806) rotate(-45)" textLength="72" lengthAdjust="spacingAndGlyphs">Burlingame</text>
<text transform="translate(1104.500 806) rotate(-45)" textLength="64" lengthAdjust="spacingAndGlyphs">Bellflower</text>
</g>

<!-- chart 4 -->
<text x="1204" y="653" font-size="21" class="g" textLength="211.500" lengthAdjust="spacingAndGlyphs">Customer sales by Age</text>
<text x="1191.500" y="682" font-size="21" class="g" textLength="236.500" lengthAdjust="spacingAndGlyphs">Group and Marital Status</text>
<g fill="#ed7d31"><rect x="1181" y="795" width="15" height="10"/><rect x="1230" y="800" width="15" height="5"/><rect x="1278" y="725" width="15" height="80"/><rect x="1327" y="737" width="15" height="68"/><rect x="1375" y="732" width="15" height="73"/><rect x="1424" y="759" width="15" height="46"/></g>
<g font-size="13.500" class="d">
<text x="1173" y="783.500" textLength="31" lengthAdjust="spacingAndGlyphs">1.1M</text>
<text x="1217" y="788" textLength="41" lengthAdjust="spacingAndGlyphs">576.1K</text>
<text x="1270" y="714" textLength="31" lengthAdjust="spacingAndGlyphs">8.2M</text>
<text x="1319" y="726" textLength="31" lengthAdjust="spacingAndGlyphs">7.0M</text>
<text x="1367" y="720" textLength="31" lengthAdjust="spacingAndGlyphs">7.6M</text>
<text x="1416" y="747.500" textLength="31" lengthAdjust="spacingAndGlyphs">4.8M</text>
</g>
<g font-size="13.500" class="g" text-anchor="middle">
<text x="1188" y="829">S</text><text x="1237" y="829">M</text><text x="1286" y="829">S</text><text x="1334" y="829">M</text><text x="1383" y="829">M</text><text x="1431" y="829">S</text>
<text x="1213" y="858.500">35-44</text><text x="1310" y="858.500">45-59</text><text x="1407" y="858.500">60+</text>
</g>

<!-- slicer: country -->
<rect x="576.500" y="332.500" width="198" height="224.500" fill="#fff" stroke="#ed7d31" stroke-width="1.300"/>
<text x="587.500" y="355" font-size="15.500" font-weight="bold" class="k" textLength="60" lengthAdjust="spacingAndGlyphs">Country</text>
<use href="#ms" x="701" y="340"/><use href="#cf" x="740" y="340"/>
<path d="M587.500 366H764" stroke="#ed7d31" stroke-width="1.200"/>
<g fill="#f8cbad" stroke="#a0a0a0" stroke-width="1.200">
<rect x="587.500" y="372.500" width="149.500" height="30.500" rx="3"/><rect x="587.500" y="407.500" width="149.500" height="30.500" rx="3"/><rect x="587.500" y="442.500" width="149.500" height="30.500" rx="3"/><rect x="587.500" y="477.500" width="149.500" height="30.500" rx="3"/><rect x="587.500" y="512.500" width="149.500" height="30.500" rx="3"/>
</g>
<g font-size="17" class="k">
<text x="598.500" y="394" textLength="66.500" lengthAdjust="spacingAndGlyphs">Australia</text>
<text x="598.500" y="429" textLength="56" lengthAdjust="spacingAndGlyphs">Canada</text>
<text x="598.500" y="464" textLength="51.500" lengthAdjust="spacingAndGlyphs">France</text>
<text x="598.500" y="499" textLength="69.500" lengthAdjust="spacingAndGlyphs">Germany</text>
<text x="598.500" y="534" textLength="121.500" lengthAdjust="spacingAndGlyphs">United Kingdom</text>
</g>
<rect x="742" y="372" width="22" height="175" fill="#f0f0f0"/><rect x="749" y="395" width="8" height="107" fill="#808080"/>

<!-- slicer: marital -->
<rect x="777.500" y="329.500" width="239" height="116.500" fill="#fff" stroke="#ed7d31" stroke-width="1.300"/>
<text x="788.500" y="352" font-size="15.500" font-weight="bold" class="k" textLength="99.500" lengthAdjust="spacingAndGlyphs">MaritalStatus</text>
<use href="#ms" x="943" y="336"/><use href="#cf" x="982" y="336"/>
<path d="M788.500 362H1006" stroke="#ed7d31" stroke-width="1.200"/>
<g fill="#f8cbad" stroke="#a0a0a0" stroke-width="1.200"><rect x="788.500" y="368.500" width="217.500" height="30" rx="3"/><rect x="788.500" y="403.500" width="217.500" height="30" rx="3"/></g>
<text x="800" y="389" font-size="17" class="k" textLength="13" lengthAdjust="spacingAndGlyphs">M</text>
<text x="800" y="424" font-size="17" class="k">S</text>

<!-- slicer: age -->
<rect x="801.500" y="464.500" width="239" height="143.500" fill="#fff" stroke="#ed7d31" stroke-width="1.300"/>
<text x="812.500" y="487" font-size="15.500" font-weight="bold" class="k" textLength="28" lengthAdjust="spacingAndGlyphs">Age</text>
<use href="#ms" x="967.500" y="471"/><use href="#cf" x="1006" y="471"/>
<path d="M812.500 497H1030" stroke="#ed7d31" stroke-width="1.200"/>
<g fill="#f8cbad" stroke="#a0a0a0" stroke-width="1.200"><rect x="812.500" y="503.500" width="190.500" height="30" rx="3"/><rect x="812.500" y="538.500" width="190.500" height="30" rx="3"/><path d="M812.500 596V576.500Q812.500 573.500 815.500 573.500H1000Q1003 573.500 1003 576.500V596" /></g>
<g font-size="17" class="k">
<text x="823" y="524.500" textLength="45.500" lengthAdjust="spacingAndGlyphs">35-44</text>
<text x="823" y="559.500" textLength="45.500" lengthAdjust="spacingAndGlyphs">45-59</text>
<text x="823" y="594" textLength="29" lengthAdjust="spacingAndGlyphs">60+</text>
</g>
<rect x="1008" y="503" width="22" height="93" fill="#f0f0f0"/><rect x="1015" y="526" width="8" height="31" fill="#808080"/>

<!-- pivot -->
<rect x="1143" y="348" width="331.500" height="24" fill="#833c0b"/>
<rect x="1143" y="372" width="104.500" height="216.500" fill="#fce4d6"/>
<rect x="1247.500" y="372" width="227" height="216.500" fill="#f8cbad"/>
<path d="M1247.500 396H1474.500M1247.500 420H1474.500M1247.500 444H1474.500M1247.500 468H1474.500M1247.500 492H1474.500M1247.500 516H1474.500M1247.500 540H1474.500M1247.500 564H1474.500" stroke="#fce4d6" stroke-width="1"/>
<path d="M1143 444H1247.500M1143 516H1247.500" stroke="#f4b183"/>
<rect x="1143" y="588.500" width="331.500" height="24.500" fill="#833c0b"/>
<g font-size="15" font-weight="bold" fill="#fff">
<text x="1147" y="366.500" textLength="29" lengthAdjust="spacingAndGlyphs">Age</text>
<text x="1252" y="366.500" textLength="66" lengthAdjust="spacingAndGlyphs">Category</text>
<text x="1348" y="366.500" textLength="120" lengthAdjust="spacingAndGlyphs">Sum of Amount</text>
<text x="1147" y="607" textLength="87" lengthAdjust="spacingAndGlyphs">Grand Total</text>
<text x="1423" y="607" textLength="48" lengthAdjust="spacingAndGlyphs">29.4M</text>
</g>
<use href="#db" x="1227" y="351"/><use href="#db" x="1323" y="351"/>
<use href="#mb" x="1151.500" y="380.500"/><use href="#mb" x="1151.500" y="452.500"/><use href="#mb" x="1151.500" y="524.500"/>
<g font-size="15" font-weight="bold" class="k">
<text x="1165" y="390.500" textLength="42" lengthAdjust="spacingAndGlyphs">35-44</text>
<text x="1165" y="462.500" textLength="42" lengthAdjust="spacingAndGlyphs">45-59</text>
<text x="1165" y="534.500" textLength="27" lengthAdjust="spacingAndGlyphs">60+</text>
</g>
<g font-size="15" fill="#2b2b2b">
<text x="1252" y="390.500" textLength="84" lengthAdjust="spacingAndGlyphs">Accessories</text>
<text x="1252" y="414.500" textLength="37" lengthAdjust="spacingAndGlyphs">Bikes</text>
<text x="1252" y="438.500" textLength="60" lengthAdjust="spacingAndGlyphs">Clothing</text>
<text x="1252" y="462.500" textLength="84" lengthAdjust="spacingAndGlyphs">Accessories</text>
<text x="1252" y="486.500" textLength="37" lengthAdjust="spacingAndGlyphs">Bikes</text>
<text x="1252" y="510.500" textLength="60" lengthAdjust="spacingAndGlyphs">Clothing</text>
<text x="1252" y="534.500" textLength="84" lengthAdjust="spacingAndGlyphs">Accessories</text>
<text x="1252" y="558.500" textLength="37" lengthAdjust="spacingAndGlyphs">Bikes</text>
<text x="1252" y="582.500" textLength="60" lengthAdjust="spacingAndGlyphs">Clothing</text>
<text x="1430" y="390.500" textLength="41" lengthAdjust="spacingAndGlyphs">46.6K</text>
<text x="1434" y="414.500" textLength="37" lengthAdjust="spacingAndGlyphs">1.6M</text>
<text x="1430" y="438.500" textLength="41" lengthAdjust="spacingAndGlyphs">24.7K</text>
<text x="1422" y="462.500" textLength="49" lengthAdjust="spacingAndGlyphs">336.1K</text>
<text x="1425" y="486.500" textLength="46" lengthAdjust="spacingAndGlyphs">14.7M</text>
<text x="1422" y="510.500" textLength="49" lengthAdjust="spacingAndGlyphs">169.6K</text>
<text x="1422" y="534.500" textLength="49" lengthAdjust="spacingAndGlyphs">318.0K</text>
<text x="1425" y="558.500" textLength="46" lengthAdjust="spacingAndGlyphs">12.0M</text>
<text x="1422" y="582.500" textLength="49" lengthAdjust="spacingAndGlyphs">145.5K</text>
</g>

<!-- selected cell -->
<rect x="1024" y="396" width="120" height="25" fill="none" stroke="#107c41" stroke-width="2"/><rect x="1141.500" y="418" width="5.500" height="5.500" fill="#107c41" stroke="#fff" stroke-width=".5"/>

<!-- vertical scrollbar -->
<rect x="1894" y="270" width="25" height="683" fill="#0a0a0a"/>
<path d="M1907 275 1913 285H1901Z" fill="#b5b5b5"/>
<rect x="1904" y="355" width="7" height="563" rx="3.500" fill="#959595"/>
<path d="M1901 941H1913L1907 950Z" fill="#b5b5b5"/>

<!-- sheet tabs -->
<rect x="0" y="953" width="1919" height="40" fill="#0b0b0b"/>
<path d="M38 966 33 972 38 978M74 966 79 972 74 978" fill="none" stroke="#ccc" stroke-width="1.200"/>
<circle cx="110" cy="972" r="1.500" fill="#ddd"/><circle cx="114.500" cy="972" r="1.500" fill="#ddd"/><circle cx="119" cy="972" r="1.500" fill="#ddd"/>
<g font-size="16.500" class="w">
<text x="150" y="979" textLength="61.500" lengthAdjust="spacingAndGlyphs">Sheet12</text>
<text x="243" y="979" textLength="101" lengthAdjust="spacingAndGlyphs">Dash Board 1</text>
<text x="378" y="979" textLength="39" lengthAdjust="spacingAndGlyphs">Sales</text>
<text x="449" y="979" textLength="82" lengthAdjust="spacingAndGlyphs">Customers</text>
<text x="563" y="979" textLength="46" lengthAdjust="spacingAndGlyphs">work1</text>
</g>
<path d="M227 961V985M361 961V985M432 961V985M547 961V985M625 961V985M756 961V985" stroke="#444"/>
<path d="M631 953H752V982Q752 988 746 988H637Q631 988 631 982Z" fill="#fff"/>
<text x="640.500" y="976" font-size="16.500" class="k" textLength="100.500" lengthAdjust="spacingAndGlyphs">Dash Board2</text>
<rect x="640" y="983" width="101" height="2" fill="#107c41"/>
<path d="M816 966V978M810 972H822" stroke="#e8e8e8" stroke-width="1.500"/>
<circle cx="1156" cy="966.500" r="1.300" fill="#ddd"/><circle cx="1156" cy="972" r="1.300" fill="#ddd"/><circle cx="1156" cy="977.500" r="1.300" fill="#ddd"/>
<rect x="1176" y="962" width="720" height="21" rx="10" fill="#171717"/>
<path d="M1190 967V978L1184 972.500ZM1882 967V978L1888 972.500Z" fill="#bbb"/>
<rect x="1197" y="967" width="656" height="11" rx="5.500" fill="#959595"/>
<path d="M0 993H1919" stroke="#3c3c3c"/>

<!-- status bar -->
<rect x="0" y="994" width="1919" height="26" fill="#131313"/>
<text x="14" y="1012.500" font-size="13" fill="#e6e6e6" textLength="36" lengthAdjust="spacingAndGlyphs">Ready</text>
<circle cx="85" cy="1001" r="3" fill="none" stroke="#eee"/><path d="M77 1004H93M85 1004V1011L80 1018M85 1011 91 1018" fill="none" stroke="#eee" stroke-width="1.200"/>
<text x="98" y="1012.500" font-size="13" font-weight="bold" class="w" textLength="152" lengthAdjust="spacingAndGlyphs">Accessibility: Investigate</text>
<rect x="1547" y="994" width="50" height="26" fill="#2a2a2a"/>
<path d="M1564 1000H1580V1014H1564ZM1569.300 1000V1014M1574.700 1000V1014M1564 1004.700H1580M1564 1009.300H1580" fill="none" stroke="#eee" stroke-width="1.100"/>
<rect x="1614" y="999.500" width="16" height="15" fill="none" stroke="#eee" stroke-width="1.200"/><path d="M1618 1003.500H1626V1010.500H1618Z M1618 1007H1626" fill="none" stroke="#ccc"/>
<path d="M1663 1000H1679V1014H1663ZM1671 1000V1008H1663" fill="none" stroke="#eee" stroke-width="1.200"/>
<path d="M1704 1007H1712M1720 1007H1845M1852 1007H1860M1856 1003V1011" stroke="#ccc" stroke-width="1.100"/>
<rect x="1780" y="1000" width="6" height="14" fill="#a8a8a8"/>
<text x="1877" y="1012" font-size="13" fill="#e6e6e6" textLength="31" lengthAdjust="spacingAndGlyphs">100%</text>
<path d="M0 1020H1919" stroke="#3a3a3a"/>

<!-- taskbar -->
<linearGradient id="tb" x1="0" x2="1" y1="0" y2="0"><stop offset="0" stop-color="#1a1715"/><stop offset=".1" stop-color="#2a1f19"/><stop offset=".24" stop-color="#33241a"/><stop offset=".34" stop-color="#1e1c1b"/><stop offset=".6" stop-color="#1e1e1e"/><stop offset=".78" stop-color="#2a1f1b"/><stop offset=".87" stop-color="#32221d"/><stop offset="1" stop-color="#1d1b1b"/></linearGradient>
<rect x="0" y="1021" width="1919" height="58" fill="url(#tb)"/>
<circle cx="38" cy="1046" r="10" fill="#f0922e"/><path d="M30 1064C24 1064 24 1055 31 1055 33 1049 43 1049 45 1055 52 1055 52 1064 46 1064Z" fill="#a8d4ee"/>
<circle cx="48" cy="1038" r="9.500" fill="#f5b98a"/><text x="48" y="1043" font-size="13" fill="#222" text-anchor="middle">6</text>
<text x="64" y="1044" font-size="14" class="w" textLength="32" lengthAdjust="spacingAndGlyphs">27°C</text>
<text x="64" y="1065" font-size="14" fill="#cfcfcf" textLength="81" lengthAdjust="spacingAndGlyphs">Partly sunny</text>
<g fill="#4cc2ff"><rect x="613" y="1036" width="14" height="14"/><rect x="629" y="1036" width="14" height="14"/><rect x="613" y="1052" width="14" height="14" fill="#37a8ec"/><rect x="629" y="1052" width="14" height="14" fill="#37a8ec"/></g>
<rect x="660" y="1030" width="274" height="40" rx="20" fill="#3a3a3a"/>
<circle cx="682" cy="1049" r="6.500" fill="none" stroke="#e8e8e8" stroke-width="1.700"/><path d="M687 1054 692 1059" stroke="#e8e8e8" stroke-width="1.700"/>
<text x="705" y="1056.500" font-size="15.500" fill="#d8d8d8" textLength="51" lengthAdjust="spacingAndGlyphs">Search</text>

<!-- watermark (under taskbar icons) -->
<clipPath id="wm"><rect x="800" y="953" width="320" height="120"/></clipPath>
<g clip-path="url(#wm)" fill="#8a8a8a" stroke="#8a8a8a" opacity=".58">
<text transform="translate(958 1008) scale(.74 1)" text-anchor="middle" font-size="92" font-weight="bold" stroke-width="5" stroke-linejoin="round" font-family="'DejaVu Sans',sans-serif">مستقل</text>
<text x="843" y="1050" font-size="41" font-weight="bold" stroke-width="0" textLength="229" lengthAdjust="spacingAndGlyphs">mostaql.com</text>
</g>

<rect x="949" y="1044" width="23" height="20" rx="2" fill="#7a7a7a"/><rect x="957" y="1037" width="22" height="20" rx="2" fill="#f0f0f0"/><rect x="957" y="1044" width="15" height="13" fill="#c8c8c8"/>
<path d="M1004 1045V1041Q1004 1037 1008 1037H1014L1018 1041H1034V1064H1004Z" fill="#f8cf3e"/><path d="M1004 1041V1037H1015L1018 1041Z" fill="#e6a828"/><rect x="1009" y="1055" width="20" height="8" rx="1" fill="#1f7fd0"/><rect x="1017" y="1071" width="5" height="3.500" rx="1.500" fill="#9a9a9a"/>
<circle cx="1074.500" cy="1049.500" r="13" fill="none" stroke="#3ecf73" stroke-width="2.600"/><path d="M1068.500 1044C1068 1051 1074 1057 1081 1056L1081.500 1052.500 1078 1051 1076 1053 1071.500 1048 1073 1046 1071.500 1042.500Z" fill="#3ecf73"/><path d="M1060 1065 1063 1056 1069 1062Z" fill="#3ecf73"/><rect x="1072" y="1071" width="5" height="3.500" rx="1.500" fill="#9a9a9a"/>
<path d="M1114 1046H1143V1062Q1143 1065 1140 1065H1117Q1114 1065 1114 1062Z" fill="#f2f2f2"/><path d="M1122 1046C1122 1036 1135 1036 1135 1046" fill="none" stroke="#5cc3e8" stroke-width="2"/><rect x="1122" y="1049" width="6" height="6" fill="#e8512a"/><rect x="1129" y="1049" width="6" height="6" fill="#7cb82f"/><rect x="1122" y="1056" width="6" height="6" fill="#2da5ec"/><rect x="1129" y="1056" width="6" height="6" fill="#f9b81b"/>
<circle cx="1187" cy="1054" r="10" fill="#4a6ec0"/><rect x="1169" y="1045" width="16" height="16" rx="2" fill="#3a65bb"/><text x="1177" y="1058" font-size="11" fill="#fff" text-anchor="middle" font-weight="bold">T</text>
<circle cx="1195" cy="1039" r="10" fill="#cc2a20"/><text x="1195" y="1044" font-size="13.500" fill="#fff" text-anchor="middle">1</text><rect x="1182" y="1071" width="5" height="3.500" rx="1.500" fill="#9a9a9a"/>
<circle cx="1239.500" cy="1050" r="15" fill="#1e7fd6"/><path d="M1227 1042C1233 1032 1249 1033 1254 1046 1255 1054 1249 1057 1243 1056 1248 1051 1246 1045 1240 1043 1235 1041 1230 1041 1227 1042Z" fill="#55d28e"/><path d="M1226 1052C1228 1044 1236 1041 1241 1045 1237 1046 1233 1050 1234 1056 1235 1061 1241 1064 1248 1063 1240 1067 1229 1062 1226 1052Z" fill="#1356a8"/><rect x="1237" y="1071" width="5" height="3.500" rx="1.500" fill="#9a9a9a"/>
<rect x="1269.500" y="1025" width="48.500" height="50" rx="5" fill="#2e2e2e"/>
<rect x="1284" y="1036" width="25" height="29" rx="2" fill="#21a366"/><path d="M1284 1051H1309V1065H1284Z" fill="#185c37"/><path d="M1297 1036H1309V1051H1297Z" fill="#33c481"/>
<rect x="1279" y="1043" width="16" height="16" rx="1" fill="#107c41"/><text x="1287" y="1056" font-size="12" font-weight="bold" fill="#fff" text-anchor="middle">X</text>
<rect x="1284" y="1070" width="20" height="3.500" rx="1.700" fill="#4cc2ff"/>
<path d="M1605 1054 1611 1047 1617 1054" fill="none" stroke="#eee" stroke-width="1.500"/>
<text x="1645" y="1056" font-size="13.500" class="w" textLength="29" lengthAdjust="spacingAndGlyphs">ENG</text>
<path d="M1697 1046C1702 1041 1710 1041 1715 1046M1700 1050C1703 1047 1709 1047 1712 1050M1703 1054C1705 1052 1707 1052 1709 1054" fill="none" stroke="#eee" stroke-width="1.500"/><circle cx="1706" cy="1058" r="1.500" fill="#eee"/>
<path d="M1727 1048H1731L1736 1043V1059L1731 1054H1727ZM1739 1047C1741 1049 1741 1053 1739 1055M1742 1044C1745 1048 1745 1054 1742 1058" fill="none" stroke="#eee" stroke-width="1.300"/>
<rect x="1757" y="1045" width="18" height="12" rx="2" fill="none" stroke="#eee" stroke-width="1.300"/><rect x="1762" y="1047" width="11" height="8" fill="#eee"/><path d="M1762 1039 1758 1047H1763L1760 1053" fill="none" stroke="#eee"/>
<text x="1810" y="1044" font-size="14" class="w" textLength="55" lengthAdjust="spacingAndGlyphs">6:51 AM</text>
<text x="1798" y="1065" font-size="14" class="w" textLength="67" lengthAdjust="spacingAndGlyphs">7/21/2025</text>
<path d="M1882 1058V1050C1882 1042 1893 1042 1893 1050V1058L1896 1059H1879Z" fill="#eee"/><circle cx="1887.500" cy="1061" r="2" fill="#eee"/><text x="1884" y="1053" font-size="8" fill="#333">Z</text>
</svg>
</body></html>
